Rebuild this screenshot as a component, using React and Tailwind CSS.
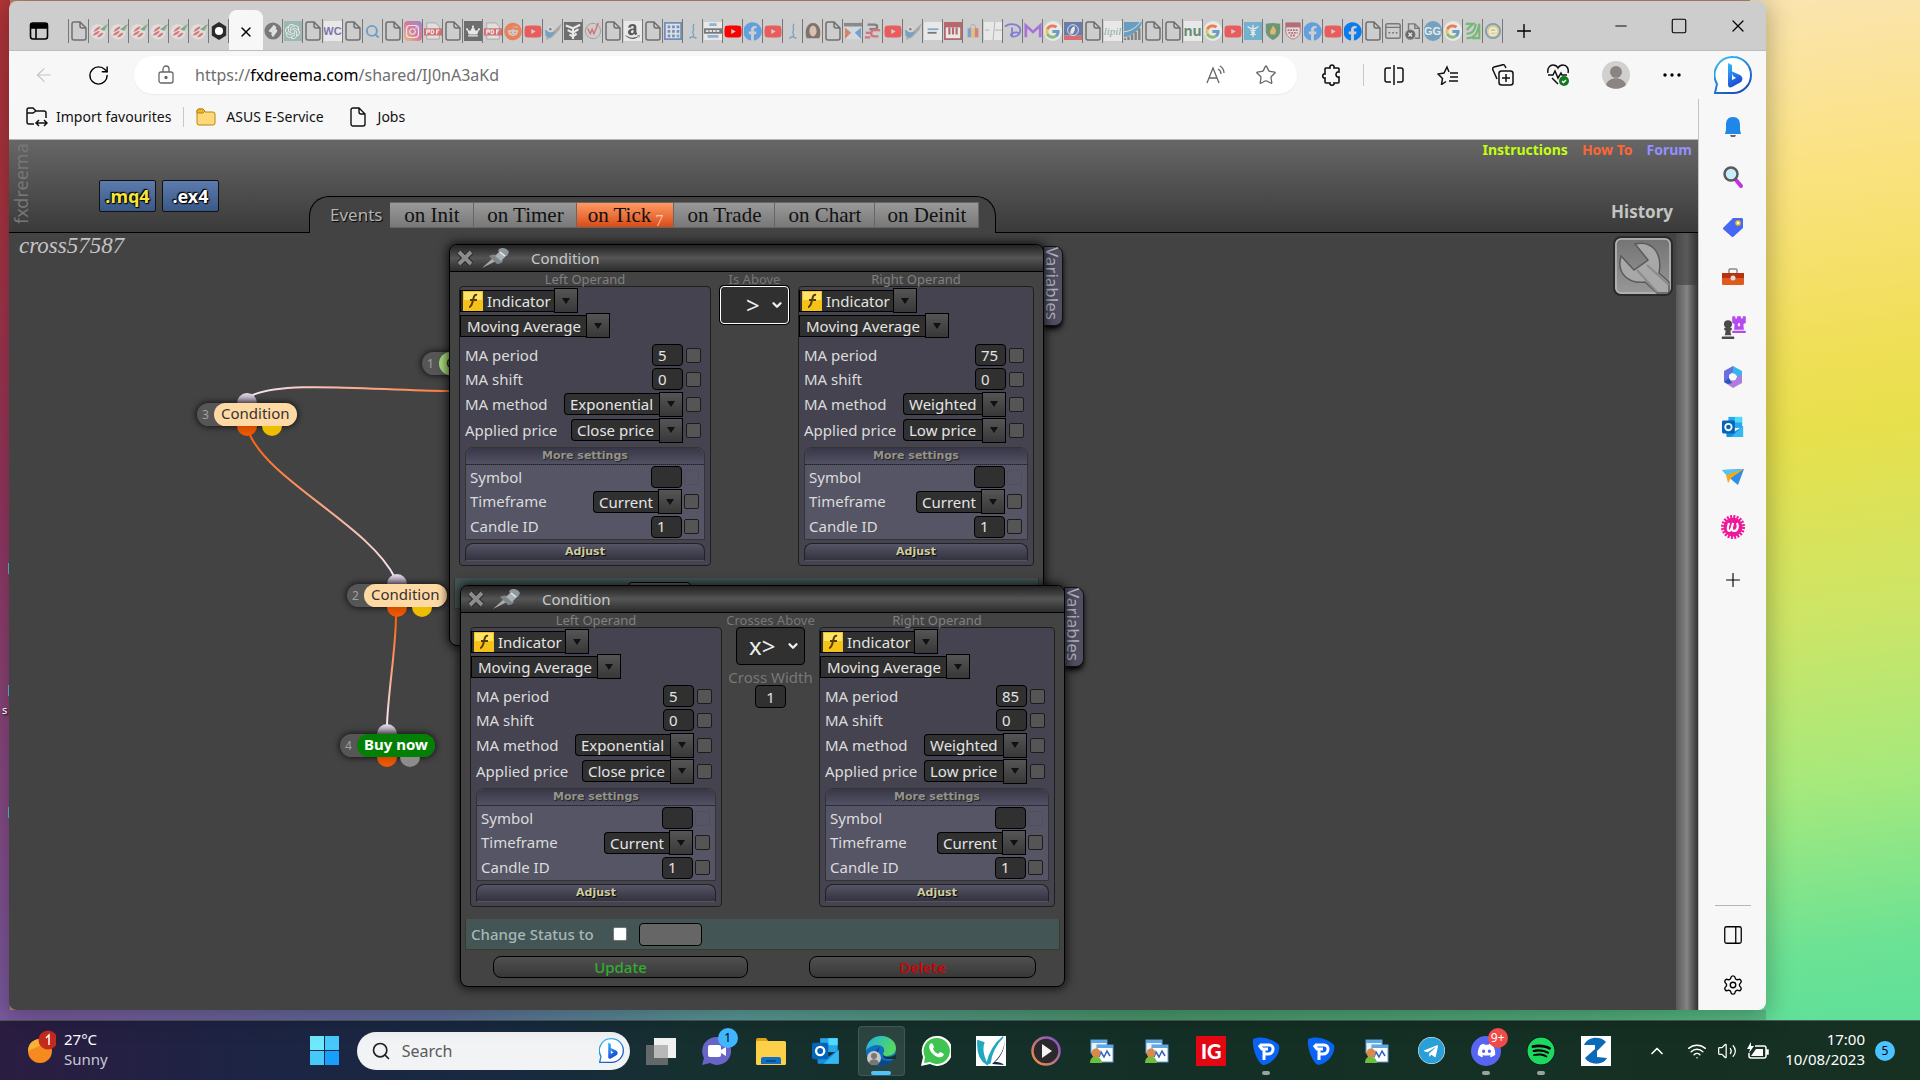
import React, { useId } from 'react';
import {
  ArrowLeft,
  RotateCw,
  Star,
  Search,
  Plus,
  Minus,
  Square,
  X,
  ChevronUp,
  ChevronDown,
  Settings,
  PanelRight,
  Volume2,
  Wifi,
} from 'lucide-react';
import {
  FaInstagram,
  FaYoutube,
  FaFacebook,
  FaAmazon,
  FaReddit,
  FaTelegram,
  FaDiscord,
  FaSpotify,
  FaChessPawn,
  FaChessRook,
  FaCrown,
} from 'react-icons/fa';
import { FcGoogle } from 'react-icons/fc';
import { SiOpenai } from 'react-icons/si';

/* ---------- favicons ---------- */

const DocIcon = () => (
  <svg viewBox="0 0 16 20" className="h-5 w-4" fill="none" stroke="#6f6f6f" strokeWidth="1.5">
    <path d="M3 1h6l6 6v10a2 2 0 0 1-2 2H3a2 2 0 0 1-2-2V3a2 2 0 0 1 2-2zM9 1v4a2 2 0 0 0 2 2h4" />
  </svg>
);

const PeasIcon = () => (
  <svg viewBox="0 0 20 20" className="h-5 w-5">
    <circle cx="9" cy="11" r="8.500" fill="#f0ecea" />
    <path d="M11 8l9-6-4 8z" fill="#3f8f4c" />
    <path d="M4 11c1-3 4-6 8-6-1 3-4 5-8 6zM3 15c1-2 4-5 8-5-1 3-4 5-8 5zM8 17c1-3 4-5 7-5-1 3-3 5-7 5z" fill="#e0383a" />
  </svg>
);

const FAVICONS = {
  doc: <DocIcon />,
  peas: <PeasIcon />,
  hex: (
    <svg viewBox="0 0 20 20" className="h-5 w-5">
      <path d="M10 0l8 5v10l-8 5-8-5V5z" fill="#2b2b2b" />
      <circle cx="10" cy="10" r="4.500" fill="#fff" />
    </svg>
  ),
  bird: (
    <svg viewBox="0 0 20 20" className="h-5 w-5">
      <path d="M4 15l9-7 7-7-3 8-8 8-7 3z" fill="#8a8a8a" />
      <path d="M1 9l5 1 6 2-5 5-5-1z" fill="#2b7fc0" />
      <circle cx="7" cy="8" r="3.500" fill="#ddd" />
      <circle cx="7" cy="8" r="1.500" fill="#555" />
    </svg>
  ),
  scribble: (
    <svg viewBox="0 0 20 20" className="h-5 w-5" fill="none" stroke="#2b7fc0" strokeWidth="1.4">
      <path d="M11 2c-2 4 1 5-1 8s3 3 0 6l-4 2c3-3 5-1 8 0" />
    </svg>
  ),
  grid: (
    <svg viewBox="0 0 20 20" className="h-5 w-5">
      <path d="M1 1h18v18H1z" fill="#eef" stroke="#2d5ba8" strokeWidth="2" />
      <path d="M4 4h3v3H4zM9 4h3v3H9zM14 4h3v3h-3zM4 9h3v3H4zM9 9h3v3H9zM14 9h3v3h-3zM4 14h3v3H4zM9 14h3v3H9z" fill="#2d5ba8" />
      <path d="M14 14h3v3h-3z" fill="#1aa08a" />
    </svg>
  ),
  diamond: (
    <svg viewBox="0 0 20 20" className="h-5 w-5">
      <circle cx="10" cy="10" r="9.500" fill="#333" />
      <path d="M11 3l3 3-6 6-3-2zM9 11l4-4 2 3-5 7-2-3z" fill="#eee" />
    </svg>
  ),
  gpt: (
    <span className="flex h-5 w-5 items-center justify-center bg-[#74aa9c] text-white">
      <SiOpenai size={15} />
    </span>
  ),
  wc: <span className="w-5 bg-white text-center font-['Liberation_Sans'] text-[11px] leading-5 font-bold text-[#3a2a8c]">WC</span>,
  search: <Search size={15} color="#1b78c8" strokeWidth={3} />,
  insta: (
    <span className="flex h-5 w-5 items-center justify-center rounded bg-linear-to-tr from-[#fdb035] via-[#e1306c] to-[#7b3fd0] text-white">
      <FaInstagram size={15} />
    </span>
  ),
  pdf: (
    <svg viewBox="0 0 20 20" className="h-5 w-5">
      <path d="M3 1h10l4 4v14H3z" fill="#eee" stroke="#888" />
      <path d="M0 7h20v8H0z" fill="#d22" />
      <path d="M3 14V9h3v2H3M8 9v4h2l1-2-1-2zM14 14V9h3M14 11h2" fill="none" stroke="#fff" strokeWidth="1.300" />
    </svg>
  ),
  crown: (
    <span className="flex h-5 w-5 items-center justify-center bg-[#222] text-white">
      <FaCrown size={14} />
    </span>
  ),
  reddit: <FaReddit size={19} color="#ff4500" />,
  yt: <FaYoutube size={21} color="#f00" />,
  tree: (
    <svg viewBox="0 0 20 20" className="h-5 w-5">
      <path d="M0 0h20v20H0z" fill="#222" />
      <path d="M2 4l8 3 8-4M4 9l6 3 6-4M6 14l4 2 4-3M10 7v12" stroke="#fff" strokeWidth="2.4" fill="none" />
    </svg>
  ),
  compass: (
    <svg viewBox="0 0 20 20" className="h-5 w-5" fill="none">
      <circle cx="10" cy="10" r="8.500" stroke="#8a6a6a" />
      <path d="M4 7l3 6 2-5 2 5 5-12" stroke="#d22" strokeWidth="1.500" />
    </svg>
  ),
  amazon: (
    <span className="flex h-5 w-5 items-center justify-center bg-white text-black">
      <FaAmazon size={17} />
    </span>
  ),
  film: (
    <svg viewBox="0 0 20 20" className="h-5 w-5">
      <path d="M0 0h20v20H0z" fill="#fff" />
      <path d="M0 7h20v6H0z" fill="#333" />
      <path d="M6 3h8M4 16h12" stroke="#5b9bd5" strokeWidth="3" />
      <path d="M2 10h16" stroke="#eee" strokeWidth="2" strokeDasharray="3 1" />
    </svg>
  ),
  fb: (
    <span className="flex h-5 w-5 items-center justify-center text-[#0a7cf0]">
      <FaFacebook size={19} />
    </span>
  ),
  face: (
    <svg viewBox="0 0 20 20" className="h-5 w-5">
      <path d="M3 18C0 10 3 1 10 1s10 9 7 17z" fill="#3b2a20" />
      <ellipse cx="10" cy="10" rx="4" ry="6" fill="#e2b49a" />
    </svg>
  ),
  hourglass: (
    <svg viewBox="0 0 20 20" className="h-5 w-5">
      <path d="M0 1h20v18H0z" fill="#d7e3ee" />
      <path d="M0 1h20v4H0z" fill="#555" />
      <path d="M1 6l7 6-7 7z" fill="#e04a22" />
      <path d="M19 6l-7 6 7 7z" fill="#2b7fd0" />
    </svg>
  ),
  swirl: (
    <svg viewBox="0 0 20 20" className="h-5 w-5" fill="none" strokeWidth="2.6">
      <path d="M4 3h8c4 0 3 5 0 5H6" stroke="#444" />
      <path d="M18 9h-7c-4 0-4 7 0 7h5M2 12h6M1 17h6" stroke="#d22f3a" />
    </svg>
  ),
  caption: (
    <svg viewBox="0 0 20 20" className="h-5 w-5">
      <path d="M0 0h20v20H0z" fill="#fff" />
      <path d="M4 8h12" stroke="#3d8fc9" strokeWidth="2" />
      <path d="M4 12h10" stroke="#333" strokeWidth="2" />
    </svg>
  ),
  piano: (
    <svg viewBox="0 0 20 20" className="h-5 w-5">
      <path d="M0 0h20v20H0z" fill="#a31621" />
      <path d="M2 6h16v12H2z" fill="#fff" />
      <path d="M6 6v8M10 6v8M14 6v8" stroke="#a31621" strokeWidth="2.400" />
    </svg>
  ),
  bag: (
    <svg viewBox="0 0 20 20" className="h-5 w-5">
      <path d="M7 7c0-6 6-6 6 0" fill="none" stroke="#888" />
      <path d="M4 7h4v10H4z" fill="#3b78d8" />
      <path d="M8 7h4v10H8z" fill="#f2b632" />
      <path d="M12 7h4v10h-4z" fill="#d9463a" />
    </svg>
  ),
  lines: (
    <svg viewBox="0 0 20 20" className="h-5 w-5">
      <path d="M0 0h20v20H0z" fill="#fff" />
      <path d="M12 0l-2 20M1 9h5M12 9h8" stroke="#999" />
    </svg>
  ),
  dee: (
    <svg viewBox="0 0 20 20" className="h-5 w-5" fill="none" stroke="#4a3ce0" strokeWidth="2">
      <path d="M1 5C8 0 19 3 18 10c0 5-8 8-10 5s8-5 9-2M9 6v11" />
    </svg>
  ),
  em: (
    <svg viewBox="0 0 20 20" className="h-5 w-5" fill="none" stroke="#8a2be2" strokeWidth="3">
      <path d="M2 17V4l8 7 8-7v13" />
    </svg>
  ),
  google: (
    <span className="flex h-5 w-5 items-center justify-center rounded-full bg-white">
      <FcGoogle size={17} />
    </span>
  ),
  knight: (
    <svg viewBox="0 0 20 20" className="h-5 w-5">
      <path d="M0 0h20v15H0z" fill="#1b3a8c" />
      <path d="M0 15h20v5H0z" fill="#d22" />
      <circle cx="10" cy="9" r="6" fill="none" stroke="#fff" />
      <path d="M7 13c0-5 2-8 5-8v4l-2 4z" fill="#fff" />
    </svg>
  ),
  script: <span className="w-5 bg-white text-center font-['Liberation_Serif'] text-[11px] leading-5 text-[#4b8f8a] italic">lipil</span>,
  stripes: (
    <svg viewBox="0 0 20 20" className="h-5 w-5">
      <path d="M0 0h20C18 9 10 15 0 17z" fill="#1b78b8" />
      <path d="M0 11C8 10 14 6 18 0" stroke="#fff" fill="none" />
      <path d="M1 20v-2M5 20v-4M9 20v-6M13 20V11M17 20V7" stroke="#444" strokeWidth="2.6" />
    </svg>
  ),
  nu: <span className="w-5 bg-white text-center font-['Noto_Sans'] text-sm leading-5 font-bold text-[#0b5a35]">nu</span>,
  caduceus: (
    <svg viewBox="0 0 20 20" className="h-5 w-5">
      <path d="M0 0h20v20H0z" fill="#2b9bd0" />
      <path d="M10 3v14M4 5c3 3 9 3 12 0M7 9c6 1 6 4 0 5M13 9c-6 1-6 4 0 5" stroke="#fff" strokeWidth="1.4" fill="none" />
    </svg>
  ),
  flame: (
    <svg viewBox="0 0 20 20" className="h-5 w-5">
      <path d="M2 2l8-1 8 1v8c0 5-4 8-8 10-4-2-8-5-8-10z" fill="#1d6b32" />
      <path d="M10 4c4 5 4 6 2 10H8c-3-4 0-5 2-10z" fill="#f5a623" />
    </svg>
  ),
  shield: (
    <svg viewBox="0 0 20 20" className="h-5 w-5">
      <path d="M2 1h16v9c0 5-4 8-8 9-4-1-8-4-8-9z" fill="#f3e9e9" stroke="#a31f34" />
      <path d="M2 1h16v5H2z" fill="#a31f34" />
      <path d="M4 9h12M5 12h10M7 15h6" stroke="#a31f34" strokeWidth="2" strokeDasharray="2 1" />
    </svg>
  ),
  calendar: (
    <svg viewBox="0 0 20 20" className="h-5 w-5" fill="none" stroke="#333" strokeWidth="1.6">
      <rect x="2" y="2" width="16" height="16" rx="2" />
      <path d="M2 6h16M5 12h2M9 12h2M13 12h2" />
    </svg>
  ),
  docx: (
    <svg viewBox="0 0 20 20" className="h-5 w-5" fill="none" stroke="#333" strokeWidth="1.5">
      <path d="M5 9V2h7l5 5v11h-5M12 2v5h5" />
      <circle cx="7" cy="14" r="5" fill="#111" />
      <path d="M5 12l4 4M9 12l-4 4" stroke="#fff" />
    </svg>
  ),
  gg: (
    <span className="flex h-5 w-5 items-center justify-center rounded-full bg-[#2b7fb8] font-['Liberation_Sans'] text-[11px] font-bold text-white">
      GG
    </span>
  ),
  bars: (
    <svg viewBox="0 0 20 20" className="h-5 w-5" fill="none" stroke="#2ea82e" strokeWidth="2.4">
      <path d="M2 2h8L3 9M3 13c7 0 9-4 10-11M3 18c10 0 12-6 14-16v16H9" />
    </svg>
  ),
  ie: (
    <svg viewBox="0 0 20 20" className="h-5 w-5" fill="none">
      <circle cx="10" cy="10" r="8" fill="#e8c93a" stroke="#3f78b0" strokeWidth="2" />
      <path d="M5 11h9c0-6-8-6-8 0 0 5 6 4 8 2" stroke="#fff" strokeWidth="2" />
    </svg>
  ),
};

const TABS_BEFORE = ['doc', 'peas', 'peas', 'peas', 'peas', 'peas', 'peas', 'hex!'];

const TABS_AFTER = [
  'diamond', 'gpt', 'doc', 'wc', 'doc', 'search', 'doc', 'insta', 'pdf', 'doc', 'crown', 'pdf', 'reddit', 'yt',
  'bird', 'tree', 'compass', 'doc', 'amazon', 'doc', 'grid', 'scribble', 'film', 'yt!', 'fb', 'yt', 'scribble',
  'face', 'doc', 'hourglass', 'swirl', 'yt', 'bird', 'caption', 'piano', 'bag', 'lines', 'dee', 'em', 'google',
  'knight', 'doc', 'script', 'stripes', 'doc', 'doc', 'nu', 'google', 'yt', 'caduceus', 'flame', 'shield', 'fb',
  'yt', 'fb!', 'doc', 'calendar', 'docx', 'gg', 'google', 'bars', 'ie',
];

const TabButton = ({ name }) => {
  const bright = name.endsWith('!');
  const key = name.replace('!', '');
  const dim = !bright && key !== 'doc';
  return (
    <button aria-label={key} className="flex h-6 w-5 shrink-0 items-center justify-center border-r border-[#777]">
      <span className={`flex w-[18px] justify-center overflow-hidden ${dim ? 'opacity-55' : ''}`}>{FAVICONS[key]}</span>
    </button>
  );
};

const BingLogo = ({ size }) => (
  <svg width={size} height={size} viewBox="0 0 38 38">
    <defs>
      <linearGradient id="bingRing" x1="0" y1="0" x2="0.6" y2="1">
        <stop offset="0" stopColor="#35c8f0" />
        <stop offset="1" stopColor="#1a4fc4" />
      </linearGradient>
      <linearGradient id="bingB" x1="0" y1="0" x2="0.4" y2="1">
        <stop offset="0" stopColor="#37bdf5" />
        <stop offset="1" stopColor="#1b48d8" />
      </linearGradient>
    </defs>
    <path d="M19 1a18 18 0 1 1 0 36H1l2-9A18 18 0 0 1 19 1z" fill="#fff" stroke="url(#bingRing)" strokeWidth="2" />
    <path d="M14 7l4 2v15l4-2-3-2-2-5 9 4c3 2 3 5 1 7l-9 5c-3 1-4 0-4-3z" fill="url(#bingB)" />
  </svg>
);

/* ---------- browser chrome ---------- */

const TabStrip = () => (
  <div className="flex h-[50px] items-end border-b border-[#bdbdbd] bg-[#cdcdcd] pl-5">
    <button aria-label="Tab actions" className="mb-[7px] flex h-6 w-[39px] items-center">
      <svg viewBox="0 0 20 20" className="h-5 w-5" fill="none" stroke="#000" strokeWidth="1.6">
        <rect x="1.5" y="2" width="17" height="16" rx="2.5" />
        <path d="M2 3h16v4H2z" fill="#000" />
        <path d="M7 7v11" />
      </svg>
    </button>
    <div className="mb-[7px] flex border-l border-[#777]">
      {TABS_BEFORE.map((name, i) => (
        <TabButton key={i} name={name} />
      ))}
    </div>
    <div className="flex h-10 w-[34px] shrink-0 items-center justify-center rounded-t-lg bg-[#f7f7f7]">
      <button aria-label="Close tab" className="mt-1">
        <X size={16} strokeWidth={2} />
      </button>
    </div>
    <div className="mb-[7px] flex">
      {TABS_AFTER.map((name, i) => (
        <TabButton key={i} name={name} />
      ))}
    </div>
    <button aria-label="New tab" className="mb-[7px] ml-2.5 flex h-6 items-center">
      <Plus size={22} strokeWidth={1.5} />
    </button>
    <div className="mr-[18px] mb-3.5 ml-auto flex items-center gap-10 self-end">
      <button aria-label="Minimise"><Minus size={18} strokeWidth={1.25} /></button>
      <button aria-label="Maximise"><Square size={18} strokeWidth={1.5} /></button>
      <button aria-label="Close"><X size={20} strokeWidth={1.5} /></button>
    </div>
  </div>
);

const AddressBar = () => (
  <div className="flex h-12 items-center bg-[#f7f7f7] pr-3.5 pl-6">
    <button aria-label="Back" className="mr-8 text-[#c4c4c4]"><ArrowLeft size={22} strokeWidth={1.25} /></button>
    <button aria-label="Refresh" className="mr-6"><RotateCw size={23} strokeWidth={1.5} /></button>
    <div className="flex h-[38px] flex-1 items-center rounded-full bg-white pr-5 pl-[23px] shadow-xs">
      <svg viewBox="0 0 18 20" className="mr-5 h-5 w-[18px]" fill="none" stroke="#666" strokeWidth="1.3">
        <rect x="2" y="7" width="14" height="11" rx="2" />
        <path d="M6 7V4a3 3 0 0 1 6 0v3" />
        <circle cx="9" cy="12.500" r="1" fill="#666" />
      </svg>
      <a href="#address" className="flex-1 text-base text-[#6e6e6e]">
        https://<span className="text-black">fxdreema.com</span>/shared/IJ0nA3aKd
      </a>
      <button aria-label="Read aloud" className="mr-7">
        <svg viewBox="0 0 22 20" className="h-5 w-[22px]" fill="none" stroke="#666" strokeWidth="1.3">
          <path d="M2 18L8 3l6 15M4 13h8M13 4c2 1 3 3 3 5M15 1c3 2 4 4 4 7" />
        </svg>
      </button>
      <button aria-label="Add to favourites" className="text-[#666]"><Star size={22} strokeWidth={1.4} /></button>
    </div>
    <div className="ml-6 flex items-center gap-[33px]">
      <div className="-mr-[13px] flex items-center border-r border-[#c8c8c8] pr-5">
        <button aria-label="Extensions">
          <svg viewBox="0 0 22 22" className="h-[22px] w-[22px]" fill="none" stroke="#111" strokeWidth="1.600">
            <path d="M5 4h4c-1-4 5-4 4 0h4a1 1 0 0 1 1 1v3c-4-1-4 6 0 5v5a1 1 0 0 1-1 1h-4c1 3-5 3-4 0H5a1 1 0 0 1-1-1v-4c-3 1-3-5 0-4V5a1 1 0 0 1 1-1z" />
          </svg>
        </button>
      </div>
      <button aria-label="Split screen">
        <svg viewBox="0 0 20 20" className="h-5 w-5" fill="none" stroke="#111" strokeWidth="1.5">
          <path d="M7 3H3a2 2 0 0 0-2 2v10a2 2 0 0 0 2 2h4M13 3h4a2 2 0 0 1 2 2v10a2 2 0 0 1-2 2h-4M10 0v20" />
        </svg>
      </button>
      <button aria-label="Favourites">
        <svg viewBox="0 0 22 20" className="h-5 w-[22px]" fill="none" stroke="#111" strokeWidth="1.5">
          <path d="M12 7l-2-5-3 6-6 1 4.500 4.500-1 6 4.500-3M13 8h8M13 12h8M12 16h9" />
        </svg>
      </button>
      <button aria-label="Collections">
        <svg viewBox="0 0 22 22" className="h-[22px] w-[22px]" fill="none" stroke="#111" strokeWidth="1.5">
          <rect x="7" y="7" width="14" height="14" rx="2.500" />
          <path d="M14 10v8M10 14h8M5 15l-4-9a2 2 0 0 1 1-3l8-2a2 2 0 0 1 3 1l1 2" />
        </svg>
      </button>
      <button aria-label="Browser essentials">
        <svg viewBox="0 0 22 22" className="h-[22px] w-[22px]" fill="none" stroke="#111" strokeWidth="1.5">
          <path d="M1 9C0 4 3 1 6 1c2 0 4 1 5 3 1-2 3-3 5-3 4 0 6 4 5 8M1 11h5l2-4 3 7 3-5 1 2h5M5 14l6 6" />
          <circle cx="17" cy="17" r="5" fill="#127a1c" stroke="none" />
          <path d="M15 17l1.500 1.500L19 16" stroke="#fff" />
        </svg>
      </button>
      <button aria-label="Profile">
        <svg viewBox="0 0 28 28" className="h-7 w-7">
          <circle cx="14" cy="14" r="14" fill="#d2d0ce" />
          <circle cx="14" cy="11" r="6" fill="#8a8583" />
          <path d="M4 24c2-9 18-9 20 0-5 5-15 5-20 0z" fill="#8a8583" />
        </svg>
      </button>
      <button aria-label="Settings and more">
        <svg viewBox="0 0 18 4" className="h-1 w-[18px]">
          <circle cx="2" cy="2" r="1.700" /><circle cx="9" cy="2" r="1.700" /><circle cx="16" cy="2" r="1.700" />
        </svg>
      </button>
      <button aria-label="Bing chat"><BingLogo size={38} /></button>
    </div>
  </div>
);

const FavouritesBar = () => (
  <div className="flex h-[41px] items-center border-b border-[#b5b5b5] bg-[#f7f7f7] pb-1 pl-[17px] text-sm text-[#111]">
    <button className="flex items-center gap-2">
      <svg viewBox="0 0 22 20" className="h-5 w-[22px]" fill="none" stroke="#111" strokeWidth="1.5">
        <path d="M8 17H3a2 2 0 0 1-2-2V3a2 2 0 0 1 2-2h4l3 3h8a2 2 0 0 1 2 2v5M1 6h6l3-2M11 16h10M13 13l-3 3 3 3M18 13l3 3-3 3" />
      </svg>
      Import favourites
    </button>
    <span className="mx-3 h-5 w-px bg-[#c8c8c8]" />
    <button className="flex items-center gap-2.5">
      <svg viewBox="0 0 20 18" className="h-[18px] w-5" fill="#ffd977" stroke="#b8860b">
        <path d="M1 3a2 2 0 0 1 2-2h4l2 3h8a2 2 0 0 1 2 2v9a2 2 0 0 1-2 2H3a2 2 0 0 1-2-2z" />
        <path d="M1 5h6l2-2-2-2H3a2 2 0 0 0-2 2z" fill="#e8b52e" />
      </svg>
      ASUS E-Service
    </button>
    <button className="ml-[26px] flex items-center gap-3">
      <svg viewBox="0 0 16 20" className="h-5 w-4" fill="none" stroke="#111" strokeWidth="1.4">
        <path d="M3 1h6l6 6v10a2 2 0 0 1-2 2H3a2 2 0 0 1-2-2V3a2 2 0 0 1 2-2zM9 1v4a2 2 0 0 0 2 2h4" />
      </svg>
      Jobs
    </button>
  </div>
);

const OutlookIcon = ({ className }) => (
  <svg viewBox="0 0 24 24" className={className}>
    <path d="M7 1h15v12H7z" fill="#28a8ea" />
    <path d="M14 1h8v6h-8z" fill="#50d9ff" />
    <path d="M4 12l10 5 9-6v12H5z" fill="#1490df" />
    <path d="M23 11L10 23h13z" fill="#35b8f1" />
    <rect x="0" y="5" width="14" height="14" rx="1.500" fill="#0364b8" />
    <circle cx="7" cy="12" r="3.500" fill="none" stroke="#fff" strokeWidth="2" />
  </svg>
);

const Sidebar = () => (
  <aside className="flex w-[68px] shrink-0 flex-col items-center border-l border-[#c4c4c4] bg-[#f7f7f7] pt-4 pb-3.5">
    <div className="flex flex-col items-center gap-[26px]">
      <button aria-label="Notifications">
        <svg viewBox="0 0 24 24" className="h-6 w-6">
          <path d="M12 2c5 0 7 3 7 8v5l1 4H4l1-4v-5c0-5 2-8 7-8z" fill="#1f87e8" />
          <path d="M9 20h6l-1 2h-4z" fill="#666" />
        </svg>
      </button>
      <button aria-label="Search">
        <svg viewBox="0 0 24 24" className="h-6 w-6">
          <path d="M15 15l5 6" stroke="#c22fe8" strokeWidth="4" strokeLinecap="round" />
          <circle cx="10" cy="9" r="6.500" fill="#c9ecfa" stroke="#5a5a5a" strokeWidth="2.500" />
        </svg>
      </button>
      <button aria-label="Shopping">
        <svg viewBox="0 0 24 24" className="h-6 w-6">
          <path d="M12 3h9l1 1v9l-10 9h-1l-9-8v-1z" fill="#4668f5" />
          <circle cx="17" cy="8" r="2" fill="#fff" stroke="#f5c518" strokeWidth="1.500" />
        </svg>
      </button>
      <button aria-label="Tools">
        <svg viewBox="0 0 24 24" className="h-6 w-6">
          <path d="M8 8V5a1 1 0 0 1 1-1h6a1 1 0 0 1 1 1v3" fill="none" stroke="#8a8a8a" strokeWidth="1.500" />
          <rect x="1" y="8" width="22" height="12" rx="1.500" fill="#e05a1e" />
          <path d="M1 8h22v5H1z" fill="#b5330f" />
          <circle cx="12" cy="13" r="2.500" fill="#ddd" />
        </svg>
      </button>
      <button aria-label="Games" className="flex h-6 items-end">
        <FaChessPawn size={20} color="#4a4a4a" />
        <FaChessRook size={18} color="#b44af0" className="-ml-2 mb-1.5" />
      </button>
      <button aria-label="Microsoft 365">
        <svg viewBox="0 0 24 24" className="h-6 w-6">
          <path d="M12 1l9 5v6l-5 5v-6l-5-3V2z" fill="#35b4ee" />
          <path d="M12 1L3 6v11l5 1V10l4-3z" fill="#6a6fe0" />
          <path d="M3 17l6-1 7-4 5-2v8l-9 5z" fill="#b07ae0" />
          <path d="M3 17l5-4 3 5-4 1z" fill="#2b55b8" />
          <circle cx="12" cy="12" r="3.500" fill="#f7f7f7" />
        </svg>
      </button>
      <button aria-label="Outlook"><OutlookIcon className="h-6 w-6 p-px" /></button>
      <button aria-label="Drop">
        <svg viewBox="0 0 24 24" className="h-6 w-6">
          <path d="M1 5l22-1-6 16-5-4z" fill="#2f8fe8" />
          <path d="M1 5l22-1L6 11z" fill="#53c5f5" />
          <path d="M23 4L5 10l2 8 3-5z" fill="#f5a81c" />
        </svg>
      </button>
      <button aria-label="Wish">
        <svg viewBox="0 0 24 24" className="h-6 w-6" fill="none">
          <circle cx="12" cy="12" r="10.500" stroke="#f0189a" strokeWidth="3" strokeDasharray="2 1.300" />
          <circle cx="12" cy="12" r="9.500" fill="#f0189a" />
          <path d="M8 8c-2 6-1 8 0 8 2 0 3-3 4-8-2 6-1 8 1 8 3 0 5-4 3-8" stroke="#fff" strokeWidth="2.200" />
        </svg>
      </button>
    </div>
    <button aria-label="Customise" className="mt-[30px]"><Plus size={22} strokeWidth={1.25} /></button>
    <div className="mt-auto flex flex-col items-center">
      <span className="mb-[18px] h-px w-9 bg-[#b5b5b5]" />
      <button aria-label="Toggle sidebar" className="mb-7"><PanelRight size={22} strokeWidth={1.4} /></button>
      <button aria-label="Settings"><Settings size={22} strokeWidth={1.5} /></button>
    </div>
  </aside>
);

/* ---------- builder page ---------- */

const EVENTS = [
  { name: 'on Init', width: 'w-[84px]' },
  { name: 'on Timer', width: 'w-[103px]' },
  { name: 'on Tick', width: 'w-[97px]', count: 7 },
  { name: 'on Trade', width: 'w-[101px]' },
  { name: 'on Chart', width: 'w-[100px]' },
  { name: 'on Deinit', width: 'w-[104px]' },
];

const PageHeader = () => (
  <header className="flex h-[93px] bg-linear-to-b from-[#676767] to-[#3a3a3a]">
    <div className="flex w-[300px] shrink-0 border-b border-black">
      <div className="flex w-[90px] pb-2 pl-0.5">
        <span className="rotate-180 text-lg leading-5 text-[#777] [writing-mode:vertical-rl]">fxdreema</span>
      </div>
      <div className="flex gap-1.5 pt-10 font-bold">
        <button className="h-8 w-[57px] rounded-xs border border-[#111] bg-linear-to-b from-[#5d7cad] to-[#3a5887] text-lg leading-7 text-[#f8e53a] [text-shadow:0_0_2px_#000,0_0_2px_#000,1px_1px_1px_#000,-1px_-1px_1px_#000]">
          .mq4
        </button>
        <button className="h-8 w-[57px] rounded-xs border border-[#111] bg-linear-to-b from-[#5d7cad] to-[#3a5887] text-lg leading-7 text-white [text-shadow:0_0_2px_#000,0_0_2px_#000,1px_1px_1px_#000,-1px_-1px_1px_#000]">
          .ex4
        </button>
      </div>
    </div>
    <nav className="mt-14 flex rounded-t-[20px] border border-b-0 border-black bg-[#434343] pt-1 pr-4 pl-5">
      <span className="mr-2 text-[17px] leading-7 text-[#b4b4b4] [text-shadow:1px_1px_1px_#000]">Events</span>
      {EVENTS.map((ev) => (
        <button
          key={ev.name}
          className={`${ev.width} mt-px h-[26px] border border-l-0 border-[#666] font-['Liberation_Serif',serif] text-[21px] leading-[22px] whitespace-nowrap text-[#111] ${
            ev.count ? 'bg-linear-to-b from-[#ff9a62] to-[#d84a12]' : 'bg-linear-to-b from-[#9a9a9a] to-[#787878]'
          }`}
        >
          {ev.name}
          {ev.count && <sub className="ml-1 text-base leading-none text-[#ffc9a8]">{ev.count}</sub>}
        </button>
      ))}
    </nav>
    <div className="flex flex-1 flex-col items-end border-b border-black font-bold">
      <div className="flex gap-3.5 pr-1.5 text-sm leading-5">
        <a href="#instructions" className="text-[#c3ff10]">Instructions</a>
        <a href="#howto" className="text-[#ff6633]">How To</a>
        <a href="#forum" className="text-[#9390ff]">Forum</a>
      </div>
      <h2 className="mt-[38px] mr-[25px] text-[17px] leading-7 text-[#c4c4c4]">History</h2>
    </div>
  </header>
);

const ArrowCell = () => (
  <span className="flex h-[25px] w-6 items-center justify-center border border-black bg-linear-to-b from-[#555] to-[#383838]">
    <svg viewBox="0 0 8 6" className="h-1.5 w-2"><path d="M0 0h8L4 6z" fill="#111" /></svg>
  </span>
);

const DropDown = ({ id, value, label, icon, square }) => (
  <div className="flex items-center">
    <div className={`flex h-[22px] items-center border border-r-0 border-black bg-[#303030] ${square ? 'pl-px' : 'rounded-l'}`}>
      {icon && (
        <svg viewBox="0 0 20 20" className="ml-px h-5 w-5">
          <rect width="20" height="20" fill="#f5c21a" />
          <rect x="1" y="1" width="18" height="8" fill="#fbe26a" />
          <path d="M14 4c-5-2-3 12-8 12M7 9h7" stroke="#5a3a00" strokeWidth="2" fill="none" />
        </svg>
      )}
      <select
        id={id}
        aria-label={label}
        defaultValue={value}
        className={`appearance-none bg-transparent text-[15px] leading-5 text-[#e4e4e4] outline-none ${icon ? 'pr-[3px] pl-1' : 'px-[5px]'}`}
      >
        <option>{value}</option>
      </select>
    </div>
    <ArrowCell />
  </div>
);

const Tick = ({ label, ghost }) => (
  <input
    type="checkbox"
    aria-label={label}
    className={`h-[15px] w-[15px] appearance-none rounded-xs border ${ghost ? 'border-[#504f60] bg-transparent' : 'border-[#1c1c1c] bg-[#555]'}`}
  />
);

const Row = ({ label, value, select, ghost, height, inner }) => {
  const id = useId();
  return (
    <div className={`flex items-center ${height} ${inner ? 'gap-0.5 pr-[5px] pl-1' : 'gap-[3px] pr-[9px] pl-[5px]'}`}>
      <label htmlFor={id} className="mr-auto whitespace-nowrap">{label}</label>
      {select ? (
        <DropDown id={id} value={value} />
      ) : (
        <input
          id={id}
          defaultValue={value}
          className="h-[22px] w-[31px] rounded border border-black bg-[#303030] pl-[5px] text-[15px] text-[#e4e4e4]"
        />
      )}
      <Tick label={`${label} option`} ghost={ghost} />
    </div>
  );
};

const Operand = ({ title, width, period, method, price }) => (
  <section className={width}>
    <h3 className="text-center text-[13px] leading-[14px] text-[#808080]">{title}</h3>
    <div className="rounded border border-[#1e1e1e] bg-[#44434f] pt-px pb-1 text-[15px] text-[#dcdcdc]">
      <DropDown label={`${title} type`} value="Indicator" icon square />
      <DropDown label={`${title} indicator`} value="Moving Average" square />
      <div className="pt-[5px]">
        <Row label="MA period" value={period} height="h-6" />
        <Row label="MA shift" value="0" height="h-6" />
        <Row label="MA method" value={method} select height="h-[26px]" />
        <Row label="Applied price" value={price} select height="h-[26px]" />
      </div>
      <div className="mx-[5px] mt-1 rounded-t-lg border border-[#33332f] bg-[#565565]">
        <button className="block h-[17px] w-full rounded-t-lg border-b border-dotted border-[#222] bg-linear-to-b from-[#383748] to-[#535264] font-['DejaVu_Sans'] text-[11px] leading-4 font-bold text-[#94948a] [text-shadow:1px_1px_1px_#222]">
          More settings
        </button>
        <Row label="Symbol" value="" ghost height="h-6" inner />
        <Row label="Timeframe" value="Current" select height="h-[25px]" inner />
        <Row label="Candle ID" value="1" height="h-[25px]" inner />
      </div>
      <div className="mx-[5px] mt-[3px]">
        <button className="block h-[18px] w-full rounded-t-lg border border-[#222] border-b-[#555] bg-linear-to-b from-[#565567] to-[#33323f] font-['DejaVu_Sans'] text-[11px] leading-4 font-bold text-[#cdcda2] [text-shadow:1px_1px_1px_#000]">
          Adjust
        </button>
      </div>
    </div>
  </section>
);

const PinIcon = () => (
  <svg viewBox="0 0 30 22" className="h-[22px] w-[30px]">
    <path d="M1 21l11-10 3 3z" fill="#aaa" />
    <path d="M8 9c3-2 6-2 9 0l5 5c-1 2-3 3-6 3z" fill="#7e868a" />
    <path d="M14 9l6-6 6 5-6 6z" fill="#a9b1b5" />
    <path d="M18 2c3-2 8-1 10 3l-2 4-4-1-5-4z" fill="#8f989c" />
    <path d="M19 5l5 4" stroke="#e8eef0" strokeWidth="1.5" />
  </svg>
);

const ConditionWindow = ({ place, caption, sign, focused, crossWidth, left, right }) => {
  const id = useId();
  return (
    <div className={`absolute ${place}`}>
      <div className="absolute top-0.5 left-full -ml-px h-20 w-5 rounded-r-lg border border-[#111] bg-[#504f62] py-1 text-[17px] leading-3 text-[#b4b4c0] shadow-md shadow-black [writing-mode:vertical-rl]">
        Variables
      </div>
      <div className="relative rounded-lg border border-black bg-[#434343] shadow-[0_0_10px_2px_rgba(0,0,0,0.7)]">
        <div className="flex h-[27px] items-center rounded-t-lg border-b border-black bg-linear-to-b from-[#222] via-[#555] to-[#2c2c2c] pl-1.5 text-[15px] text-[#c8c8c8]">
          <button aria-label="Close window">
            <svg viewBox="0 0 18 18" className="h-[18px] w-[18px]">
              <path d="M3 3l12 12M15 3L3 15" stroke="#222" strokeWidth="6" />
              <path d="M3 3l12 12M15 3L3 15" stroke="#8c8c8c" strokeWidth="4" />
            </svg>
          </button>
          <button aria-label="Pin window" className="ml-[7px]"><PinIcon /></button>
          <h2 className="ml-5">Condition</h2>
        </div>
        <div className="flex px-[9px]">
          <Operand title="Left Operand" width="w-[252px]" {...left} />
          <div className="flex flex-1 flex-col items-center">
            <label htmlFor={id} className="text-[13px] leading-[14px] whitespace-nowrap text-[#777]">{caption}</label>
            <div
              className={`flex h-[38px] w-[69px] items-center justify-end rounded border bg-[#303030] pr-1 ${
                focused ? 'border-white ring-1 ring-black' : 'border-black'
              }`}
            >
              <select id={id} className="appearance-none bg-transparent pr-2.5 text-2xl leading-8 text-[#eee] outline-none">
                <option>{sign}</option>
              </select>
              <ChevronDown size={14} strokeWidth={4} color="#eee" />
            </div>
            {crossWidth && (
              <>
                <label htmlFor={`${id}w`} className="mt-1 text-[15px] leading-4 whitespace-nowrap text-[#777]">Cross Width</label>
                <input
                  id={`${id}w`}
                  defaultValue={crossWidth}
                  className="h-[23px] w-[31px] rounded border border-black bg-[#303030] text-center text-[15px] text-[#e4e4e4]"
                />
              </>
            )}
          </div>
          <Operand title="Right Operand" width="w-[236px]" {...right} />
        </div>
        <div className="mx-1 mt-3 flex h-[31px] items-center border border-t-0 border-[#3a3a2a] bg-[#445555] pl-[5px] text-[15px] font-medium text-[#a5b8b8]">
          <label htmlFor={`${id}s`} className="mr-[19px]">Change Status to</label>
          <input id={`${id}s`} type="checkbox" className="mr-3 h-3.5 w-3.5 appearance-none rounded-xs border border-[#777] bg-white" />
          <input aria-label="Status" className="h-[23px] w-[63px] rounded border border-black bg-[#666]" />
        </div>
        <div className="flex justify-between pt-1.5 pr-7 pb-2 pl-8 text-[15px] leading-5 font-medium">
          <button className="h-[22px] w-[255px] rounded-lg border border-black bg-linear-to-b from-[#505050] to-[#383838] text-[#2fae2f]">Update</button>
          <button className="h-[22px] w-[227px] rounded-lg border border-black bg-linear-to-b from-[#505050] to-[#383838] text-[#d40000]">Delete</button>
        </div>
      </div>
    </div>
  );
};

const Port = ({ place, tone }) => <span className={`absolute h-2.5 w-5 ${place} ${tone}`} />;

const Block = ({ place, number, text, tone, ports = ['left-10', 'left-[65px]'], second }) => (
  <div className={`absolute ${place}`}>
    <Port place={`-top-2.5 rounded-t-full ${ports[0]}`} tone="bg-linear-to-b from-[#e8dcec] to-[#948a9c]" />
    <div className="relative flex h-[23px] items-center rounded-full bg-[#565656] shadow-[0_0_6px_1px_rgba(0,0,0,0.7)]">
      <span className="w-[17px] text-center text-xs text-[#a0a0a0]">{number}</span>
      <span className={`h-[23px] rounded-full px-[7px] text-[15px] leading-5 whitespace-nowrap ${tone}`}>{text}</span>
    </div>
    <Port place={`top-full rounded-b-full ${ports[0]}`} tone="bg-linear-to-b from-[#d44a00] to-[#f55c00]" />
    <Port place={`top-full rounded-b-full ${ports[1]}`} tone={second} />
  </div>
);

const Canvas = () => (
  <main className="flex flex-1 bg-[#434343]">
    <div className="relative flex-1">
      <h1 className="pl-2.5 font-['Liberation_Serif',serif] text-[23px] leading-[26px] text-[#c4c4c4] italic">cross57587</h1>
      <svg className="absolute top-0 left-0 h-[560px] w-[460px]" fill="none" strokeWidth="2">
        <defs>
          <linearGradient id="wireA" gradientUnits="userSpaceOnUse" x1="240" y1="160" x2="440" y2="160">
            <stop offset="0" stopColor="#f6e8fa" />
            <stop offset="1" stopColor="#ff7a33" />
          </linearGradient>
          <linearGradient id="wireB" gradientUnits="userSpaceOnUse" x1="240" y1="200" x2="385" y2="343">
            <stop offset="0" stopColor="#ff5f05" />
            <stop offset="1" stopColor="#f6e8fa" />
          </linearGradient>
          <linearGradient id="wireC" gradientUnits="userSpaceOnUse" x1="387" y1="384" x2="378" y2="491">
            <stop offset="0" stopColor="#ff5f05" />
            <stop offset="1" stopColor="#f6e8fa" />
          </linearGradient>
        </defs>
        <path d="M440 158C370 158 270 146 240 164" stroke="url(#wireA)" />
        <path d="M240 200C260 248 361 293 386 345" stroke="url(#wireB)" />
        <path d="M387 382C387 415 379 460 378 492" stroke="url(#wireC)" />
      </svg>
      <Block place="top-[119px] left-[413px]" number="1" text="Once per bar" tone="bg-[#a5d97a] text-[#222]" second="bg-transparent" />
      <Block place="top-[170px] left-[188px]" number="3" text="Condition" tone="bg-[#ffd9a3] text-[#333]" second="bg-[#edbe00]" />
      <Block place="top-[351px] left-[338px]" number="2" text="Condition" tone="bg-[#ffd9a3] text-[#333]" second="bg-[#edbe00]" />
      <Block
        place="top-[501px] left-[331px]"
        number="4"
        text="Buy now"
        tone="bg-[#038003] font-bold text-white"
        ports={['left-[37px]', 'left-[60px]']}
        second="bg-[#8c8c8c]"
      />
      <ConditionWindow
        place="top-[11px] left-[440px] w-[595px]"
        caption="Is Above"
        sign=">"
        focused
        left={{ period: '5', method: 'Exponential', price: 'Close price' }}
        right={{ period: '75', method: 'Weighted', price: 'Low price' }}
      />
      <ConditionWindow
        place="top-[352px] left-[451px] w-[605px]"
        caption="Crosses Above"
        sign="x>"
        crossWidth="1"
        left={{ period: '5', method: 'Exponential', price: 'Close price' }}
        right={{ period: '85', method: 'Weighted', price: 'Low price' }}
      />
    </div>
    <button aria-label="Tools" className="mt-[3px] mr-[3px] h-[60px] w-[60px] overflow-hidden rounded-lg border-2 border-[#2a2a2a] bg-linear-to-b from-[#747474] to-[#989898]">
      <svg viewBox="0 0 56 56" className="h-14 w-14">
        <rect x="1" y="1" width="54" height="54" rx="5" fill="none" stroke="#b8b8b8" strokeWidth="1.500" />
        <path d="M20 6c16-4 28 8 24 29l10 9v11H42L30 44C14 46 1 36 6 18l13 14 14-10z" fill="#a8a8a8" stroke="#5a5a5a" strokeWidth="1.500" />
        <path d="M22 32l20 22M32 27l22 20" stroke="#8a8a8a" strokeWidth="2" />
      </svg>
    </button>
    <div className="flex w-[22px] flex-col bg-linear-to-r from-[#4a4a4a] via-[#5a5a5a] to-[#333]">
      <span className="mt-[52px] flex-1 bg-linear-to-r from-[#5a5a5a] via-[#858585] to-[#333]" />
    </div>
  </main>
);

/* ---------- taskbar ---------- */

const TerminalIcon = () => (
  <svg viewBox="0 0 28 28" className="h-7 w-7">
    <rect x="4" y="3" width="16" height="13" fill="#e8f2fb" stroke="#5b9bd5" />
    <rect x="10" y="8" width="16" height="17" fill="#fff" stroke="#5b9bd5" />
    <path d="M4 3h16v3H4zM10 8h16v3H10z" fill="#5fa8e4" />
    <path d="M12 20l2-5 3 5 3-6 3 5" stroke="#2b62c4" strokeWidth="1.500" fill="none" />
    <path d="M3 26c0-9 11-9 12 0z" fill="#6cbf3a" />
    <circle cx="9" cy="16" r="4.500" fill="#d98a4a" />
  </svg>
);

const PeeIcon = () => (
  <svg viewBox="0 0 30 30" className="h-[30px] w-[30px]">
    <path d="M2 3c8-4 20 0 26 6 2 8-6 19-16 20C6 26 1 12 2 3z" fill="#0a63f5" />
    <path d="M9 9h9c6 0 5 9-1 9h-4M13 14v10M8 9l3 4h6" stroke="#fff" strokeWidth="3" fill="none" />
  </svg>
);

const APPS = [
  { name: 'Task view', icon: (
    <svg viewBox="0 0 30 30" className="h-[30px] w-[30px]">
      <rect x="8" y="2" width="22" height="20" fill="#f0f0f0" />
      <rect x="0" y="9" width="22" height="20" fill="#777" fillOpacity="0.8" />
      <path d="M8 9h14v13H8z" fill="#b8b8b8" />
    </svg>
  ) },
  { name: 'Chat', badge: '1', badgeTone: 'bg-[#3fb6ff] text-black', icon: (
    <svg viewBox="0 0 30 30" className="h-[30px] w-[30px]">
      <path d="M15 1a14 14 0 1 1-6 26l-8 2 2-7A14 14 0 0 1 15 1z" fill="#6a63c8" />
      <rect x="7" y="9" width="13" height="12" rx="2" fill="#fff" />
      <path d="M20 14l5-3v9l-5-3z" fill="#fff" />
    </svg>
  ) },
  { name: 'File Explorer', icon: (
    <svg viewBox="0 0 30 28" className="h-7 w-[30px]">
      <path d="M0 3a2 2 0 0 1 2-2h8l3 4H0z" fill="#e0a01a" />
      <rect y="4" width="30" height="24" rx="1.500" fill="#fdd04a" />
      <path d="M5 27v-5a2 2 0 0 1 2-2h16a2 2 0 0 1 2 2v5z" fill="#1270c4" />
      <path d="M10 24h10" stroke="#0a3f78" strokeWidth="1.500" />
    </svg>
  ) },
  { name: 'Outlook', icon: <OutlookIcon className="h-7 w-7" /> },
  { name: 'Microsoft Edge', active: true, icon: (
    <svg viewBox="0 0 30 30" className="h-[30px] w-[30px]">
      <defs>
        <linearGradient id="edgeTop" x1="0" y1="0" x2="1" y2="0.4">
          <stop offset="0" stopColor="#1fb2e4" />
          <stop offset="1" stopColor="#55d860" />
        </linearGradient>
      </defs>
      <circle cx="15" cy="15" r="15" fill="#0f6fc0" />
      <path d="M0 14C1 4 9 0 15 0c9 0 15 6 15 12 0 5-4 8-9 8-4 0-5-2-3-4 2-6-8-11-18-2z" fill="url(#edgeTop)" />
      <path d="M14 11c-5 7 0 17 13 13-3 4-7 6-12 6C7 28 6 15 14 11z" fill="#0c4788" />
      <path d="M18 16c-2 3 0 5 4 5 4 0 6-1 8-3v5h-9c-4-1-5-4-3-7z" fill="#16302e" />
      <circle cx="8" cy="22" r="7" fill="#c8c8c8" />
      <circle cx="8" cy="20" r="3" fill="#777" />
      <path d="M3 27c1-5 9-5 10 0-3 3-7 3-10 0z" fill="#777" />
    </svg>
  ) },
  { name: 'WhatsApp', icon: (
    <svg viewBox="0 0 30 30" className="h-[30px] w-[30px]">
      <path d="M15 0a15 15 0 1 1-6 28l-9 2 2-9A15 15 0 0 1 15 0z" fill="#fff" />
      <path d="M15 2a13 13 0 1 1-6 24l-6 1 1-6A13 13 0 0 1 15 2z" fill="#3fc351" />
      <path d="M9 8c2-2 3 0 4 3l-1 2c1 2 3 4 5 5l2-2c3 1 5 2 3 4-5 5-17-6-13-12z" fill="#fff" />
    </svg>
  ) },
  { name: 'Trading', icon: (
    <svg viewBox="0 0 30 30" className="h-[30px] w-[30px]">
      <path d="M0 0h30v30H0z" fill="#fff" />
      <path d="M2 4c-1 14 3 21 9 24-4-8-6-15-3-22M11 28C13 18 18 8 27 1c-8 8-12 17-13 26z" stroke="#22a8bc" strokeWidth="1.500" fill="#22a8bc" />
      <path d="M29 1c0 12-5 20-13 27l12 1c-3-3-6-3-9-3C26 20 29 12 29 1z" fill="#16284e" />
    </svg>
  ) },
  { name: 'Media Player', icon: (
    <svg viewBox="0 0 30 30" className="h-[30px] w-[30px]">
      <defs>
        <linearGradient id="playRing" x1="0" y1="1" x2="1" y2="0">
          <stop offset="0" stopColor="#f5903a" />
          <stop offset="1" stopColor="#7a4fd8" />
        </linearGradient>
      </defs>
      <circle cx="15" cy="15" r="13.500" fill="#2a2a2c" stroke="url(#playRing)" strokeWidth="2.500" />
      <path d="M11 8l10 7-10 7z" fill="#f4f4f4" />
    </svg>
  ) },
  { name: 'Terminal 1', icon: <TerminalIcon /> },
  { name: 'Terminal 2', icon: <TerminalIcon /> },
  { name: 'IG', icon: (
    <span className="flex h-[30px] w-[30px] items-center justify-center bg-[#e30613] font-['Lato'] text-xl font-black text-white">IG</span>
  ) },
  { name: 'P app 1', open: true, icon: <PeeIcon /> },
  { name: 'P app 2', icon: <PeeIcon /> },
  { name: 'Terminal 3', icon: <TerminalIcon /> },
  { name: 'Telegram', icon: (
    <span className="rounded-full bg-white"><FaTelegram size={27} color="#2a9fd8" /></span>
  ) },
  { name: 'Discord', open: true, badge: '9+', badgeTone: 'bg-[#f04a4a] text-white', icon: (
    <span className="flex h-[30px] w-[30px] items-center justify-center rounded-full bg-[#5865f2] text-white"><FaDiscord size={19} /></span>
  ) },
  { name: 'Spotify', open: true, icon: (
    <span className="rounded-full bg-black"><FaSpotify size={28} color="#1ed760" /></span>
  ) },
  { name: 'Z app', icon: (
    <svg viewBox="0 0 30 30" className="h-[30px] w-[30px]">
      <path d="M0 0h30v30H0z" fill="#fff" />
      <path d="M3 9C7 0 20 0 25 6l-9 9v6l10 1C22 30 8 29 4 22l10-9v-4z" fill="#0a6ab8" />
    </svg>
  ) },
];

const Taskbar = () => (
  <footer className="flex h-15 items-center border-t border-[#4b5a5c] bg-[linear-gradient(to_right,#2b1d42,#1d2444_13%,#182a40_27%,#16302f_36%,#143026_60%,#163022)] pr-[25px] pl-7 text-white">
    <button className="flex items-center gap-2 text-left text-[15px] leading-5">
      <svg viewBox="0 0 28 34" className="-mt-2 h-[34px] w-7">
        <circle cx="12" cy="21" r="12" fill="#f58a1e" />
        <path d="M0 21A12 12 0 0 1 20 12z" fill="#f7b23a" />
        <circle cx="20" cy="10" r="9.500" fill="#c42b1c" />
        <path d="M18 8l3-3v10" stroke="#fff" strokeWidth="1.500" fill="none" />
      </svg>
      <span className="pb-1">27°C<br /><span className="text-[#c8c8d4]">Sunny</span></span>
    </button>
    <button aria-label="Start" className="ml-[202px]">
      <svg viewBox="0 0 29 29" className="h-[29px] w-[29px]">
        <path d="M0 0h14v14H0z" fill="#6ee8fb" /><path d="M15 0h14v14H15zM0 15h14v14H0z" fill="#46c9fa" /><path d="M15 15h14v14H15z" fill="#16a0fb" />
      </svg>
    </button>
    <label className="ml-[18px] flex h-[38px] w-[273px] items-center rounded-full bg-[#f2f3f5] pr-1.5 pl-3.5 text-[#222]">
      <Search size={20} strokeWidth={2} />
      <input aria-label="Search" placeholder="Search" className="ml-[11px] w-0 flex-1 bg-transparent text-base outline-none placeholder:text-[#5a5a5a]" />
      <BingLogo size={25} />
    </label>
    <div className="ml-1 flex">
      {APPS.map((app) => (
        <button key={app.name} aria-label={app.name} className="relative flex h-[50px] w-[55px] items-center justify-center">
          {app.active && <span className="absolute inset-y-0 right-1 left-1 rounded border border-white/10 bg-white/10" />}
          <span className="relative flex">{app.icon}</span>
          {app.badge && (
            <span className={`absolute top-0.5 right-1.5 flex h-5 w-5 items-center justify-center rounded-full text-xs ${app.badgeTone}`}>{app.badge}</span>
          )}
          {app.active && <span className="absolute bottom-px h-1 w-5 rounded-full bg-[#4cc2ff]" />}
          {app.open && <span className="absolute bottom-px h-1 w-2 rounded-full bg-[#98a39e]" />}
        </button>
      ))}
    </div>
    <div className="ml-auto flex items-center">
      <button aria-label="Hidden icons" className="mr-5"><ChevronUp size={20} strokeWidth={2} /></button>
      <button aria-label="Network and sound" className="mr-4 flex items-center gap-2.5">
        <Wifi size={20} strokeWidth={1.75} />
        <Volume2 size={20} strokeWidth={1.5} />
        <svg viewBox="0 0 22 18" className="h-[18px] w-[22px]" fill="none" stroke="#fff" strokeWidth="1.500">
          <path d="M8 4h9a2 2 0 0 1 2 2v8a2 2 0 0 1-2 2H4a2 2 0 0 1-2-2v-3M20 8v4h1V8z" />
          <path d="M4 14l5-7h7v7z" fill="#fff" stroke="none" />
          <path d="M4 0L0 7h3l-1 4 5-7H4z" fill="#fff" stroke="none" />
        </svg>
      </button>
      <button className="pb-1 text-right text-[15px] leading-5">17:00<br />10/08/2023</button>
      <span className="ml-2.5 flex h-5 w-5 items-center justify-center rounded-full bg-[#4cc2ff] text-xs text-black">5</span>
    </div>
  </footer>
);

const App = () => (
  <div className="flex min-h-screen flex-col overflow-hidden font-['Noto_Sans',sans-serif]">
    <div className="relative flex flex-1 bg-[#b8866a] bg-[linear-gradient(to_right,#7c5aa0,#5f6f9a_25%,#5a9c98_42%,#4a9a6c_65%,#52b07c_90%,#58c088),linear-gradient(to_bottom,#b23538,#a83340_20%,#943660_50%,#7a5aa0),linear-gradient(172deg,#fbe4b0,#fae27e_18%,#f0df58_34%,#e8e04c_42%,#cde566_60%,#a6e97c_76%,#6ce294_92%,#5fe09a)] bg-[size:1766px_10px,10px_100%,170px_100%] bg-[position:left_bottom,left_top,right_top] bg-no-repeat pt-px pr-[154px] pb-2.5 pl-[9px]">
      <span className="absolute top-[702px] left-0.5 text-[11px] leading-4 text-white [text-shadow:1px_1px_2px_#000]">s</span>
      <span className="absolute top-[563px] left-2 h-[11px] w-px bg-[#4a9cc0]" />
      <span className="absolute top-[685px] left-2 h-[11px] w-px bg-[#4a9cc0]" />
      <span className="absolute top-[807px] left-2 h-[11px] w-px bg-[#4a9cc0]" />
      <div className="flex flex-1 flex-col overflow-hidden rounded-lg shadow-[0_4px_24px_4px_rgba(0,0,0,0.25)]">
        <TabStrip />
        <AddressBar />
        <div className="flex flex-1">
          <div className="flex flex-1 flex-col">
            <FavouritesBar />
            <PageHeader />
            <Canvas />
          </div>
          <Sidebar />
        </div>
      </div>
    </div>
    <Taskbar />
  </div>
);

export default App;
